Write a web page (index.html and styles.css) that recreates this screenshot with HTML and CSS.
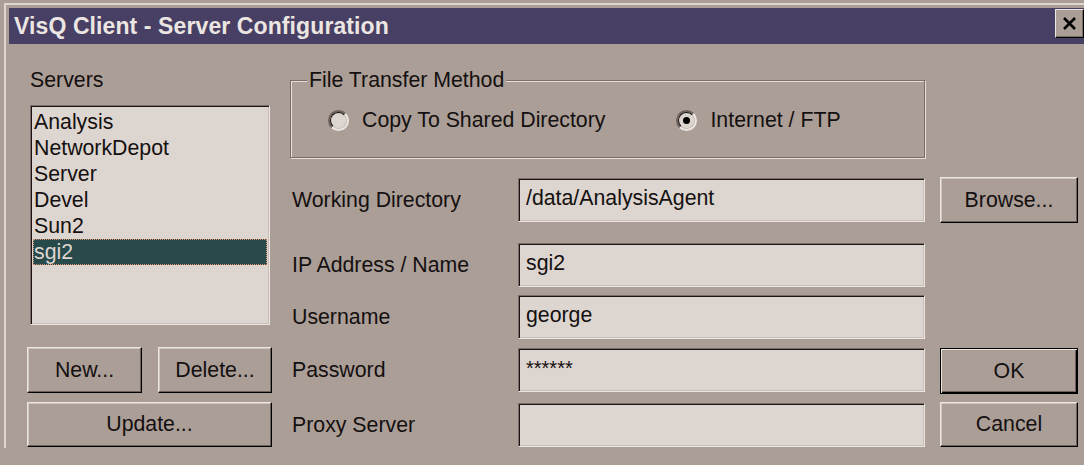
FILE: index.html
```html
<!DOCTYPE html>
<html lang="en">
<head>
<meta charset="utf-8">
<title>VisQ Client - Server Configuration</title>
<link rel="stylesheet" href="styles.css">
</head>
<body>
<div class="window">
  <div class="titlebar">
    <span class="title">VisQ Client - Server Configuration</span>
    <button class="close" aria-label="Close">
      <svg width="15" height="13" viewBox="0 0 15 13"><path d="M2 1 L13 12 M13 1 L2 12" stroke="#000" stroke-width="2.6" fill="none"/></svg>
    </button>
  </div>

  <div class="dialog">
    <div class="servers">
      <div class="caption">Servers</div>
      <ul class="listbox">
        <li>Analysis</li>
        <li>NetworkDepot</li>
        <li>Server</li>
        <li>Devel</li>
        <li>Sun2</li>
        <li class="selected">sgi2</li>
      </ul>
    </div>

    <fieldset class="group">
      <legend>File Transfer Method</legend>
      <div class="radios">
        <label class="radio"><span class="dot"></span>Copy To Shared Directory</label>
        <label class="radio second"><span class="dot checked"></span>Internet / FTP</label>
      </div>
    </fieldset>

    <div class="label row2">Working Directory</div>
    <div class="field row2">/data/AnalysisAgent</div>
    <button class="btn side row2">Browse...</button>

    <div class="label row3">IP Address / Name</div>
    <div class="field row3">sgi2</div>

    <div class="label row4">Username</div>
    <div class="field row4">george</div>

    <div class="pair row5">
      <button class="btn small">New...</button>
      <button class="btn small">Delete...</button>
    </div>
    <div class="label row5">Password</div>
    <div class="field row5 secret">******</div>
    <button class="btn side default row5">OK</button>

    <button class="btn wide row6">Update...</button>
    <div class="label row6">Proxy Server</div>
    <div class="field row6"></div>
    <button class="btn side row6">Cancel</button>
  </div>
</div>
</body>
</html>
```

FILE: styles.css
```css
html, body {
  margin: 0;
  padding: 0;
  background: #ab9e97;
  overflow: hidden;
}

body {
  width: 1084px;
  height: 465px;
  font-family: "Liberation Sans", Arial, sans-serif;
  font-size: 21.3px;
  color: #141010;
}

.window {
  margin: 3px 0 0 4px;
  width: 1090px;
  border-top: 2px solid #ddd5d0;
  border-left: 2px solid #ddd5d0;
  padding: 3px 0 0 3px;
  box-sizing: border-box;
}

/* caption bar */
.titlebar {
  height: 36px;
  width: 1075px;
  background: #483f64;
  display: flex;
  align-items: flex-start;
  justify-content: space-between;
}

.title {
  color: #ece6e2;
  font-weight: bold;
  font-size: 23px;
  line-height: 36px;
  padding-left: 5px;
  letter-spacing: 0.1px;
}

.close {
  margin-top: 1px;
  width: 29px;
  height: 29px;
  padding: 0;
  background: #ab9e97;
  border: 1px solid;
  border-color: #ece6e2 #000 #000 #ece6e2;
  box-shadow: inset -1px -1px 0 #7a6c66;
  display: flex;
  align-items: center;
  justify-content: center;
}

/* dialog body grid */
.dialog {
  margin: 24px 0 0 18px;
  display: grid;
  grid-template-columns: 245px 246px 407px 153px;
  grid-template-rows: 110px 65px 52px 53px 55px 45px;
  align-items: start;
}

.servers {
  grid-column: 1;
  grid-row: 1 / 5;
}

.caption {
  line-height: 24px;
  padding-left: 3px;
}

.listbox {
  list-style: none;
  margin: 13px 0 0 3px;
  padding: 3px 2px 0 2px;
  width: 240px;
  height: 220px;
  box-sizing: border-box;
  background: #ddd5cf;
  border: 1px solid;
  border-color: #7a6c66 #ece6e2 #ece6e2 #7a6c66;
  box-shadow: inset 1px 1px 0 #1a1414, inset -1px -1px 0 #c8bdb7;
}

.listbox li {
  line-height: 26px;
  padding-left: 1px;
  height: 26px;
  box-sizing: border-box;
}

.listbox li.selected {
  background: #294a4b;
  color: #ddd5cf;
  outline: 1px dotted #d89070;
  outline-offset: -1px;
}

/* group box */
.group {
  grid-column: 2 / 4;
  grid-row: 1;
  margin: 0 0 0 18px;
  padding: 16px 0 25px 0;
  min-width: 0;
  border: 1px solid;
  border-color: #7a6c66;
  box-shadow: inset 1px 1px 0 #e6dfdb, 1px 1px 0 #e6dfdb;
}

.group legend {
  margin-left: 16px;
  padding: 0 2px;
  line-height: 24px;
  background: #ab9e97;
}

.radios {
  display: flex;
  align-items: center;
  height: 24px;
  padding-left: 37px;
}

.radio {
  display: flex;
  align-items: center;
  gap: 13px;
}

.radio.second {
  margin-left: 71px;
}

.dot {
  width: 21px;
  height: 21px;
  box-sizing: border-box;
  border-radius: 50%;
  border: 2px solid;
  border-color: #6e605a #ece6e2 #ece6e2 #6e605a;
  background: #ddd5cf;
  display: flex;
  align-items: center;
  justify-content: center;
  position: relative;
}

.dot::before {
  content: "";
  position: absolute;
  inset: 0;
  border-radius: 50%;
  border: 1px solid;
  border-color: #111 #c8bdb7 #c8bdb7 #111;
}

.dot.checked::after {
  content: "";
  width: 7px;
  height: 7px;
  border-radius: 50%;
  background: #000;
}

/* labelled rows */
.row2 { grid-row: 2; }
.row3 { grid-row: 3; }
.row4 { grid-row: 4; }
.row5 { grid-row: 5; }
.row6 { grid-row: 6; }

.label {
  grid-column: 2;
  height: 44px;
  display: flex;
  align-items: center;
  padding-left: 20px;
}

.field {
  grid-column: 3;
  height: 44px;
  box-sizing: border-box;
  padding: 7px 0 0 7px;
  line-height: 24px;
  background: #ddd5cf;
  border: 1px solid;
  border-color: #7a6c66 #ece6e2 #ece6e2 #7a6c66;
  box-shadow: inset 1px 1px 0 #1a1414, inset -1px -1px 0 #c8bdb7;
  white-space: nowrap;
  overflow: hidden;
}

.field.secret {
  font-size: 20px;
  padding-top: 7px;
}

/* push buttons */
.btn {
  font-family: inherit;
  font-size: 21.3px;
  color: #141010;
  background: #ab9e97;
  border: 1px solid;
  border-color: #ece6e2 #000 #000 #ece6e2;
  box-shadow: inset -1px -1px 0 #6e605a, inset 1px 1px 0 #cfc6c0;
  padding: 0;
  margin: 0;
  box-sizing: border-box;
}

.btn.side {
  grid-column: 4;
  justify-self: end;
  width: 138px;
  height: 46px;
}

.row2.btn.side { margin-top: -1px; }

.btn.side.row6 { height: 45px; margin-top: -1px; }

.btn.default {
  border-color: #000;
  box-shadow: inset 1px 1px 0 #ece6e2, inset -1px -1px 0 #000, inset -2px -2px 0 #6e605a;
}

.pair {
  grid-column: 1;
  display: flex;
  gap: 16px;
  margin-top: -1px;
}

.btn.small {
  height: 46px;
  width: 115px;
}

.btn.small + .btn.small { width: 114px; }

.btn.wide {
  grid-column: 1;
  width: 245px;
  height: 45px;
  margin-top: -1px;
}
```
